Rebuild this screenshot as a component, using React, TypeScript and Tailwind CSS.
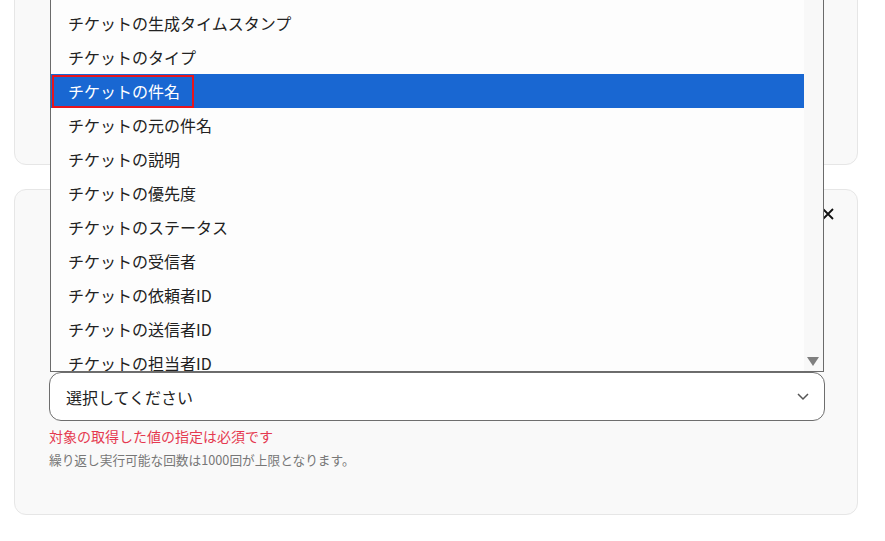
import React from 'react'

const options = [
  'チケットのID',
  'チケットの生成タイムスタンプ',
  'チケットのタイプ',
  'チケットの件名',
  'チケットの元の件名',
  'チケットの説明',
  'チケットの優先度',
  'チケットのステータス',
  'チケットの受信者',
  'チケットの依頼者ID',
  'チケットの送信者ID',
  'チケットの担当者ID',
]

export default function App() {
  const selected = 3

  return (
    <div
      className="relative w-[885px] h-[541px] overflow-hidden bg-white"
      style={{ fontFamily: '"Noto Sans CJK JP", "Noto Sans", sans-serif' }}
    >
      <div className="flex flex-col gap-6 pl-[14px] pr-[27px] -mt-[25px]">
        {/* 上のカード */}
        <div className="h-[190px] rounded-xl border border-[#e6e6e6] bg-[#f9f9f9]" />

        {/* 下のカード */}
        <div className="relative h-[326px] rounded-xl border border-[#e6e6e6] bg-[#f9f9f9] pl-[34px] pr-[32px] pt-[182px]">
          <button className="absolute top-[18px] right-[23px] w-3 h-3 flex items-center justify-center">
            <svg width="12" height="12" viewBox="0 0 12 12" fill="none" stroke="#111" strokeWidth="1.8">
              <path d="M1 1l10 10M11 1L1 11" />
            </svg>
          </button>

          <div className="flex items-center justify-between h-[49px] rounded-xl border border-[#6e6e6e] bg-white pl-4 pr-[14px]">
            <span className="text-[16px] text-[#222]">選択してください</span>
            <svg width="14" height="9" viewBox="0 0 14 9" fill="none" stroke="#555" strokeWidth="1.5">
              <path d="M2 2l5 5 5-5" />
            </svg>
          </div>
          <p className="mt-[5px] text-[14px] leading-5 text-[#e53950]">対象の取得した値の指定は必須です</p>
          <p className="mt-[6px] text-[12.7px] leading-4 text-[#777]">繰り返し実行可能な回数は1000回が上限となります。</p>
        </div>
      </div>

      {/* 開いたプルダウン */}
      <div className="absolute left-[50px] top-[-29px] w-[774px] h-[401px] border border-[#6b6b6b] bg-[#fdfdfd] flex overflow-hidden">
        <ul className="flex-1">
          {options.map((opt, i) => (
            <li
              key={opt}
              className={`h-[34px] flex items-center text-[16px] ${
                i === selected ? 'bg-[#1967d2] text-white' : 'text-[#222]'
              }`}
            >
              {i === selected ? (
                <span className="ml-px h-[33px] w-[142px] flex items-center pl-[14px] border-2 border-[#e8141c]">{opt}</span>
              ) : (
                <span className="pl-[17px]">{opt}</span>
              )}
            </li>
          ))}
        </ul>
        <div className="relative w-[19px] bg-[#f8f8f8]">
          <svg className="absolute bottom-[5px] left-[3px]" width="12" height="9" viewBox="0 0 12 9">
            <path d="M0 0h12L6 9z" fill="#7f7f7f" />
          </svg>
        </div>
      </div>
    </div>
  )
}
